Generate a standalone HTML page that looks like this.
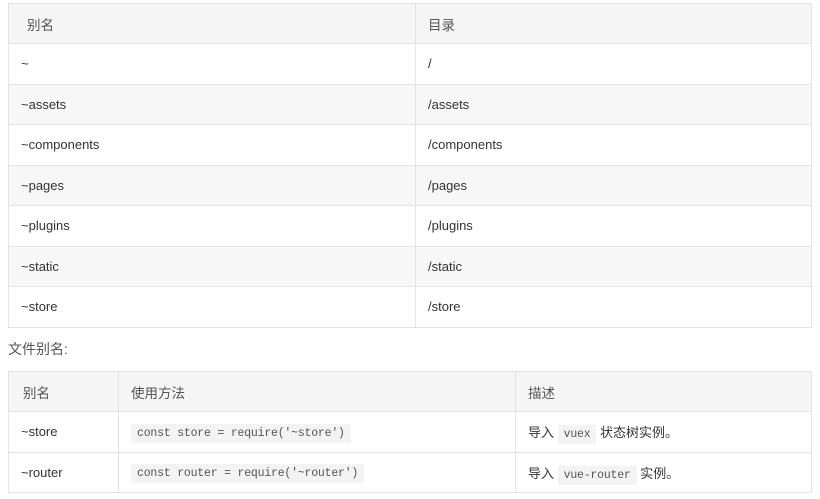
<!DOCTYPE html>
<html><head><meta charset="utf-8"><style>
body{margin:0;background:#fff;font-family:"Liberation Sans","Noto Sans CJK SC",sans-serif;font-size:13px;color:#333;}
table{border-collapse:collapse;position:absolute;left:8px;width:804px;table-layout:fixed}
td,th{border:1px solid #e3e3e3;padding:0 0 0 12px;text-align:left;font-weight:normal;}
th{background:#f5f5f5;color:#555;height:39px;font-size:13.5px}
td{height:39.5px}
tr.g td{background:#f7f7f7}
#t1 th:first-child{padding-left:18px}
code{font-family:"Liberation Mono","Noto Sans CJK SC",monospace;font-size:11.5px;background:#f3f3f3;padding:3px 6px;color:#555;letter-spacing:-0.2px}
.lbl{position:absolute;left:8px;top:339px;font-size:14px;color:#555}
</style></head><body>
<table id="t1" style="top:3px">
<colgroup><col style="width:407px"><col></colgroup>
<tr><th>别名</th><th>目录</th></tr>
<tr><td>~</td><td>/</td></tr>
<tr class="g"><td>~assets</td><td>/assets</td></tr>
<tr><td>~components</td><td>/components</td></tr>
<tr class="g"><td>~pages</td><td>/pages</td></tr>
<tr><td>~plugins</td><td>/plugins</td></tr>
<tr class="g"><td>~static</td><td>/static</td></tr>
<tr><td>~store</td><td>/store</td></tr>
</table>
<div class="lbl">文件别名:</div>
<table style="top:371px">
<colgroup><col style="width:110px"><col style="width:397px"><col></colgroup>
<tr><th style="padding-left:14px">别名</th><th>使用方法</th><th>描述</th></tr>
<tr><td>~store</td><td><code>const store = require('~store')</code></td><td>导入 <code>vuex</code> 状态树实例。</td></tr>
<tr><td>~router</td><td><code>const router = require('~router')</code></td><td>导入 <code>vue-router</code> 实例。</td></tr>
</table>
</body></html>
